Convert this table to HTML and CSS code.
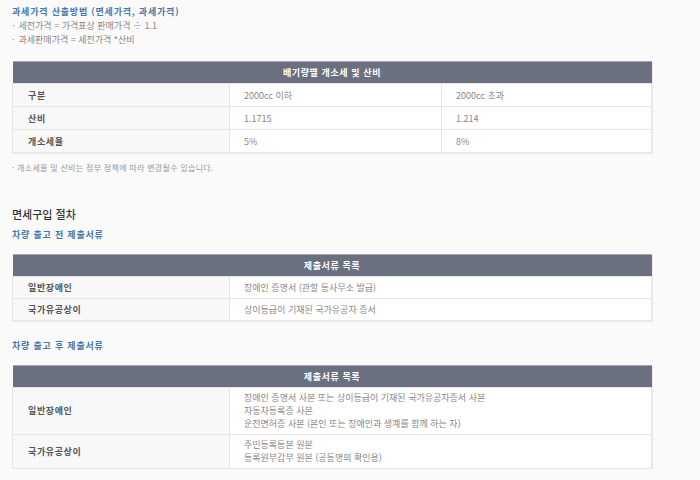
FILE: index.html
```html
<!DOCTYPE html>
<html lang="ko">
<head>
<meta charset="utf-8">
<link rel="stylesheet" href="styles.css">
</head>
<body>
<div class="page">
  <h3 class="sub-title first">과세가격 산출방법 (면세가격, 과세가격)</h3>
  <ul class="dot-list">
    <li>세전가격 = 가격표상 판매가격 ÷ 1.1</li>
    <li>과세판매가격 = 세전가격 *산비</li>
  </ul>

  <table class="tbl tbl-3">
    <colgroup><col class="c-label"><col class="c-mid"><col></colgroup>
    <thead>
      <tr><th colspan="3">배기량별 개소세 및 산비</th></tr>
    </thead>
    <tbody>
      <tr><td class="label">구분</td><td>2000cc 이하</td><td>2000cc 초과</td></tr>
      <tr><td class="label">산비</td><td>1.1715</td><td>1.214</td></tr>
      <tr><td class="label">개소세율</td><td>5%</td><td>8%</td></tr>
    </tbody>
  </table>
  <p class="note">· 개소세율 및 산비는 정부 정책에 따라 변경될수 있습니다.</p>

  <h2 class="section-title">면세구입 절차</h2>
  <h3 class="sub-title">차량 출고 전 제출서류</h3>
  <table class="tbl tbl-2">
    <colgroup><col class="c-label"><col></colgroup>
    <thead>
      <tr><th colspan="2">제출서류 목록</th></tr>
    </thead>
    <tbody>
      <tr><td class="label">일반장애인</td><td>장애인 증명서 (관할 동사무소 발급)</td></tr>
      <tr><td class="label">국가유공상이</td><td>상이등급이 기재된 국가유공자 증서</td></tr>
    </tbody>
  </table>

  <h3 class="sub-title after">차량 출고 후 제출서류</h3>
  <table class="tbl tbl-2">
    <colgroup><col class="c-label"><col></colgroup>
    <thead>
      <tr><th colspan="2">제출서류 목록</th></tr>
    </thead>
    <tbody>
      <tr class="multi"><td class="label">일반장애인</td><td>장애인 증명서 사본 또는 상이등급이 기재된 국가유공자증서 사본<br>자동차등록증 사본<br>운전면허증 사본 (본인 또는 장애인과 생계를 함께 하는 자)</td></tr>
      <tr class="multi"><td class="label">국가유공상이</td><td>주민등록등본 원본<br>등록원부갑부 원본 (공동명의 확인용)</td></tr>
    </tbody>
  </table>
</div>
</body>
</html>
```

FILE: styles.css
```css
* { box-sizing: border-box; }
html, body { margin: 0; padding: 0; }
body {
  background: #fafafa;
  font-family: "Noto Sans CJK KR", "Noto Sans", sans-serif;
  font-size: 9px;
  color: #888;
}
.page {
  width: 640px;
  margin-left: 12px;
  padding-top: 5px;
}
.sub-title {
  margin: 0;
  font-size: 9px;
  line-height: 14px;
  font-weight: 700;
  color: #4a77a8;
  letter-spacing: 0.8px;
}
.dot-list {
  list-style: none;
  margin: 0;
  padding: 0;
}
.dot-list li {
  line-height: 14px;
  color: #888;
}
.dot-list li::before {
  content: "·";
  margin-right: 4px;
}
.tbl {
  width: 640px;
  border-collapse: collapse;
  table-layout: fixed;
  background: #fff;
  box-shadow: 1px 1px 1px rgba(0,0,0,0.06);
}
.tbl col.c-label { width: 217px; }
.tbl col.c-mid { width: 212px; }
.tbl-3 { margin-top: 14px; }
.tbl th {
  background: #6b7080;
  border-top: 1px solid #a4a8b2;
  color: #fff;
  font-weight: 700;
  height: 22px;
  padding: 0;
  text-align: center;
  letter-spacing: 0.6px;
}
.tbl td {
  border: 1px solid #e6e6e6;
  padding: 3px 0 3px 14px;
  line-height: 13px;
  height: 23px;
  color: #888;
  vertical-align: middle;
}
.tbl-2 td { height: 22px; }
.tbl td.label {
  background: #f8f8f8;
  color: #555;
  font-weight: 700;
  padding-left: 15px;
  letter-spacing: 0.6px;
}
.tbl tr.multi td { padding-top: 3px; padding-bottom: 4px; height: auto; }
.note {
  margin: 8px 0 0;
  font-size: 8px;
  line-height: 14px;
  color: #999;
  letter-spacing: 0.3px;
}
.section-title {
  margin: 31px 0 0;
  font-size: 11px;
  line-height: 16px;
  font-weight: 500;
  color: #333;
}
.section-title + .sub-title { margin-top: 6px; }
.tbl-2 { margin-top: 12px; }
.sub-title.after { margin-top: 18px; }
```
